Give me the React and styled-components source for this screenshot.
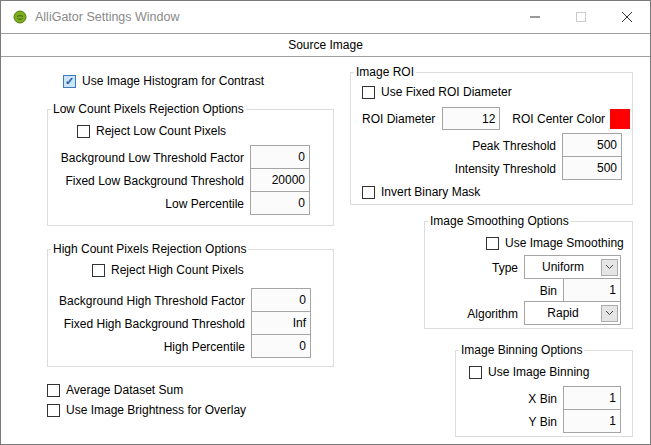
import React from "react";
import styled, { createGlobalStyle } from "styled-components";

const G = createGlobalStyle`
  body{margin:0;font-family:"Liberation Sans","Noto Sans",sans-serif;font-size:12px;color:#000;}
  *{white-space:nowrap;}
`;
const Win = styled.div`width:651px;height:445px;box-sizing:border-box;border:1px solid #7a7a7a;border-top:none;background:#fff;display:flex;flex-direction:column;overflow:hidden;`;
const Title = styled.div`height:33px;display:flex;align-items:center;padding-left:12px;gap:8px;color:#8a8a8a;font-size:12.5px;border-top:1px solid #7a7a7a;box-sizing:border-box;`;
const Ctrls = styled.div`margin-left:auto;display:flex;color:#222;`;
const Ctl = styled.div`width:46px;height:32px;display:flex;align-items:center;justify-content:center;`;
const Tab = styled.div`height:22px;border-top:1px solid #a0a0a0;border-bottom:1px solid #a0a0a0;display:flex;align-items:center;justify-content:center;`;
const Body = styled.div`display:flex;flex:1;`;
const LeftCol = styled.div`width:286px;margin-left:46px;display:flex;flex-direction:column;`;
const RightCol = styled.div`width:283px;margin-left:17px;display:flex;flex-direction:column;align-items:flex-end;`;
const Set = styled.fieldset`margin:${p=>p.$mt||0}px 0 0 0;width:${p=>p.$w}px;box-sizing:border-box;border:1px solid #dcdcdc;padding:${p=>p.$pad||"0 0 10px 0"};min-width:0;display:flex;flex-direction:column;`;
const Legend = styled.legend`padding:0 2px;margin-left:3px;line-height:14px;`;
const CheckRow = styled.label`display:flex;align-items:center;gap:6px;height:18px;margin:${p=>p.$m||"0"};`;
const Box = styled.span`width:11px;height:11px;border:1px solid ${p=>p.$on?"#3d7bbf":"#333"};background:${p=>p.$on?"#cce4f7":"#fff"};display:inline-flex;align-items:center;justify-content:center;font-size:11px;color:#1f5ea8;line-height:1;font-weight:bold;`;
const Grid = styled.div`display:grid;grid-template-columns:1fr ${p=>p.$iw||60}px;grid-auto-rows:23px;padding-right:${p=>p.$pr}px;margin-top:${p=>p.$mt||0}px;`;
const Lbl = styled.div`text-align:right;padding-right:6px;display:flex;align-items:center;justify-content:flex-end;`;
const Inp = styled.div`border:1px solid #a5a5a5;background:#fbfbfb;text-align:right;padding-right:4px;display:flex;align-items:center;justify-content:flex-end;margin-top:-1px;`;
const Sel = styled.div`border:1px solid #a5a5a5;background:#fff;display:flex;align-items:center;margin-top:-1px;`;
const SelText = styled.span`flex:1;text-align:center;`;
const Arrow = styled.span`width:15px;height:15px;margin-right:2px;background:#e5e5e5;border:1px solid #adadad;display:flex;align-items:center;justify-content:center;`;
const RoiRow = styled.div`display:flex;align-items:center;height:23px;margin:${p=>p.$m||0};`;
const Swatch = styled.div`width:20px;height:20px;background:#ff0000;margin-left:5px;`;

const Check = ({on,children,m}) => <CheckRow $m={m}><Box $on={on}>{on?"✓":""}</Box>{children}</CheckRow>;
const Chev = () => <Arrow><svg width="9" height="6" viewBox="0 0 9 6"><path d="M1 1l3.5 3.5L8 1" fill="none" stroke="#444"/></svg></Arrow>;

export default function App(){
  return <Win><G/>
    <Title>
      <svg width="14" height="14" viewBox="0 0 14 14"><circle cx="7" cy="7" r="6" fill="#7cae1e"/><circle cx="7" cy="7" r="6" fill="none" stroke="#4f7a10"/><path d="M4 6.5c1.5-1 4.5-1 6 0M4.5 8.5c1.5 1 3.5 1 5 0" stroke="#3c5c0c" fill="none"/></svg>
      AlliGator Settings Window
      <Ctrls><Ctl><svg width="10" height="10"><path d="M0 5h10" stroke="#333"/></svg></Ctl><Ctl><svg width="10" height="10"><rect x=".5" y=".5" width="9" height="9" fill="none" stroke="#ccc"/></svg></Ctl><Ctl><svg width="10" height="10"><path d="M0 0l10 10M10 0L0 10" stroke="#333"/></svg></Ctl></Ctrls>
    </Title>
    <Tab>Source Image</Tab>
    <Body>
      <LeftCol>
        <Check on m="15px 0 0 16px">Use Image Histogram for Contrast</Check>
        <Set $w={287} $mt={12}>
          <Legend>Low Count Pixels Rejection Options</Legend>
          <Check m="6px 0 4px 29px">Reject Low Count Pixels</Check>
          <Grid $pr={23} $mt={2}>
            <Lbl>Background Low Threshold Factor</Lbl><Inp>0</Inp>
            <Lbl>Fixed Low Background Threshold</Lbl><Inp>20000</Inp>
            <Lbl>Low Percentile</Lbl><Inp>0</Inp>
          </Grid>
        </Set>
        <Set $w={287} $mt={16} $pad="0 0 8px 0">
          <Legend>High Count Pixels Rejection Options</Legend>
          <Check m="5px 0 6px 44px">Reject High Count Pixels</Check>
          <Grid $pr={22} $mt={4}>
            <Lbl>Background High Threshold Factor</Lbl><Inp>0</Inp>
            <Lbl>Fixed High Background Threshold</Lbl><Inp>Inf</Inp>
            <Lbl>High Percentile</Lbl><Inp>0</Inp>
          </Grid>
        </Set>
        <Check m="14px 0 2px 0">Average Dataset Sum</Check>
        <Check>Use Image Brightness for Overlay</Check>
      </LeftCol>
      <RightCol>
        <Set $w={283} $mt={8} $pad="0 0 3px 0">
          <Legend>Image ROI</Legend>
          <Check m="4px 0 0 11px">Use Fixed ROI Diameter</Check>
          <RoiRow $m="6px 0 0 11px">ROI Diameter<Inp style={{width:52,height:21,marginLeft:7,marginTop:0}}>12</Inp><span style={{marginLeft:12}}>ROI Center Color</span><Swatch/></RoiRow>
          <Grid $pr={10} $mt={4}>
            <Lbl>Peak Threshold</Lbl><Inp>500</Inp>
            <Lbl>Intensity Threshold</Lbl><Inp>500</Inp>
          </Grid>
          <Check m="3px 0 0 11px">Invert Binary Mask</Check>
        </Set>
        <Set $w={209} $mt={9} $pad="0 0 3px 0">
          <Legend>Image Smoothing Options</Legend>
          <Check m="6px 0 4px 61px">Use Image Smoothing</Check>
          <Grid $pr={11} $iw={97}>
            <Lbl>Type</Lbl><Sel><SelText>Uniform</SelText><Chev/></Sel>
          </Grid>
          <Grid $pr={11} $iw={58}>
            <Lbl>Bin</Lbl><Inp>1</Inp>
          </Grid>
          <Grid $pr={11} $iw={97}>
            <Lbl>Algorithm</Lbl><Sel><SelText>Rapid</SelText><Chev/></Sel>
          </Grid>
        </Set>
        <Set $w={178} $mt={14} $pad="0 0 3px 0">
          <Legend>Image Binning Options</Legend>
          <Check m="6px 0 6px 13px">Use Image Binning</Check>
          <Grid $pr={11} $iw={58}>
            <Lbl>X Bin</Lbl><Inp>1</Inp>
            <Lbl>Y Bin</Lbl><Inp>1</Inp>
          </Grid>
        </Set>
      </RightCol>
    </Body>
  </Win>;
}
